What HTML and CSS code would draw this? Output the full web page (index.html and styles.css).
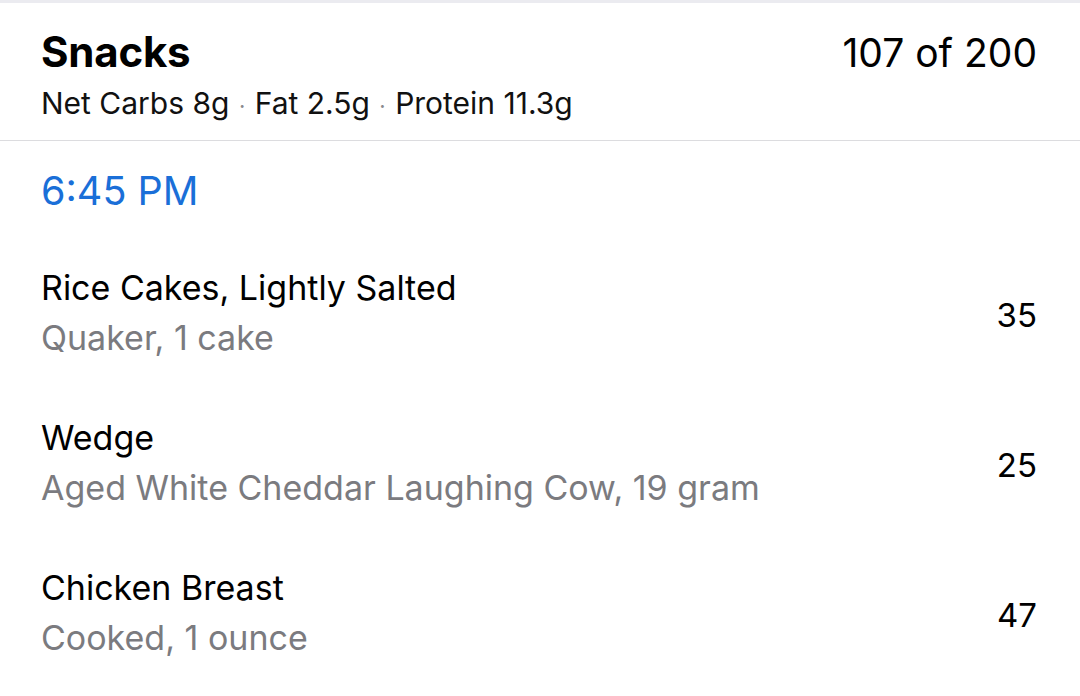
FILE: index.html
```html
<!DOCTYPE html>
<html>
<head>
<meta charset="utf-8">
<link rel="stylesheet" href="styles.css">
</head>
<body>
<div class="topstrip"></div>
<header class="meal-header">
  <div class="meal-top">
    <h1 class="meal-title">Snacks</h1>
    <div class="meal-total">107 of 200</div>
  </div>
  <div class="meal-macros">Net Carbs 8g <span class="dot">·</span> Fat 2.5g <span class="dot">·</span> Protein 11.3g</div>
</header>
<section class="entries">
  <div class="time">6:45 PM</div>
  <div class="item">
    <div class="item-text">
      <div class="item-name">Rice Cakes, Lightly Salted</div>
      <div class="item-sub">Quaker, 1 cake</div>
    </div>
    <div class="item-cal">35</div>
  </div>
  <div class="item">
    <div class="item-text">
      <div class="item-name">Wedge</div>
      <div class="item-sub">Aged White Cheddar Laughing Cow, 19 gram</div>
    </div>
    <div class="item-cal">25</div>
  </div>
  <div class="item">
    <div class="item-text">
      <div class="item-name">Chicken Breast</div>
      <div class="item-sub">Cooked, 1 ounce</div>
    </div>
    <div class="item-cal">47</div>
  </div>
</section>
</body>
</html>
```

FILE: styles.css
```css
html, body {
  margin: 0;
  padding: 0;
  background: #ffffff;
}
body {
  font-family: "Inter", "Roboto", "Liberation Sans", sans-serif;
  color: #000;
  width: 1080px;
  height: 696px;
  overflow: hidden;
}
.topstrip {
  height: 3px;
  background: #ebebf0;
}
.meal-header {
  padding: 24px 43px 16px 41px;
  border-bottom: 1px solid #dcdcdf;
}
.meal-top {
  display: flex;
  justify-content: space-between;
  align-items: baseline;
  height: 50px;
}
.meal-title {
  margin: 0;
  font-size: 42px;
  line-height: 50px;
  font-weight: 700;
  letter-spacing: -0.2px;
}
.meal-total {
  font-size: 39px;
  line-height: 50px;
  font-weight: 400;
}
.meal-macros {
  margin-top: 8px;
  font-size: 30px;
  line-height: 36px;
  color: #111;
}
.dot {
  color: #8a8a8e;
  font-size: 22px;
  padding: 0 1px;
}
.entries {
  padding: 0 43px 0 41px;
}
.time {
  height: 97px;
  display: flex;
  align-items: center;
  padding-top: 2px;
  box-sizing: border-box;
  font-size: 39.5px;
  color: #1a6fd8;
}
.item {
  height: 150px;
  display: flex;
  align-items: center;
  justify-content: space-between;
}
.item-text {
  display: flex;
  flex-direction: column;
}
.item-name {
  font-size: 34px;
  line-height: 50px;
  color: #000;
}
.item-sub {
  font-size: 34px;
  line-height: 50px;
  color: #7b7b7f;
}
.item-cal {
  font-size: 33px;
  line-height: 50px;
  padding-top: 4px;
}
```
